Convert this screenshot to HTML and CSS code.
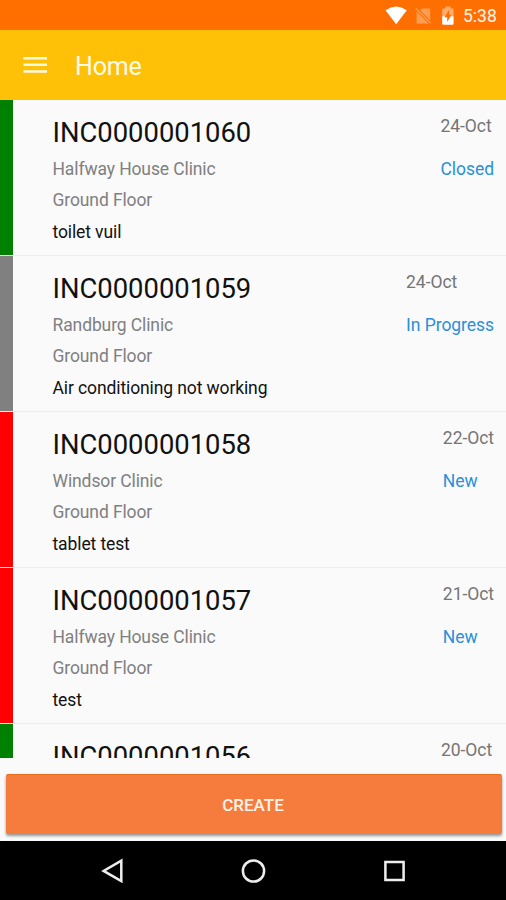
FILE: index.html
```html
<!DOCTYPE html>
<html lang="en">
<head>
<meta charset="utf-8">
<title>Home</title>
<link rel="stylesheet" href="styles.css">
</head>
<body>
<div class="screen">
  <div class="status-bar">
    <svg class="status-icons" width="76" height="30" viewBox="0 0 76 30" aria-hidden="true">
      <path d="M0.5 10.2Q11.2 3 21.8 10.2L11.2 24.2Z" fill="#fff"/>
      <path d="M45.2 8.6V20.2L35.2 10.2L37 8.6ZM31.6 11.6L43.6 23.6H31.6ZM31.2 7.8L46.2 22.8L45.2 23.8L30.2 8.8Z" fill="#ff9d52"/>
      <path d="M58.4 8.4H60.4V6.6H65.6V8.4H67.4Q68.6 8.4 68.6 9.6V16.5H57.2V9.6Q57.2 8.4 58.4 8.4Z" fill="#ffac6c"/>
      <path d="M57.2 16.3H68.6V23.5Q68.6 24.7 67.4 24.7H58.4Q57.2 24.7 57.2 23.5Z" fill="#fff"/>
      <path d="M64.3 9.5L59.5 17.3H62.2V22L66.4 14.8H64Z" fill="#ff6f00"/>
    </svg>
    <span class="clock">5:38</span>
  </div>
  <header class="app-bar">
    <svg width="24" height="18" viewBox="0 0 24 18" aria-hidden="true"><path d="M0.4 2.3H24M0.4 8.8H24M0.4 15.5H24" stroke="#fff9df" stroke-width="2.5"/></svg>
    <h1>Home</h1>
  </header>
  <main class="list">
    <article class="row closed">
      <div class="info"><h2>INC0000001060</h2><p>Halfway House Clinic</p><p>Ground Floor</p><p class="note">toilet vuil</p></div>
      <div class="meta"><p>24-Oct</p><p class="state">Closed</p></div>
    </article>
    <article class="row progress">
      <div class="info"><h2>INC0000001059</h2><p>Randburg Clinic</p><p>Ground Floor</p><p class="note">Air conditioning not working</p></div>
      <div class="meta"><p>24-Oct</p><p class="state">In Progress</p></div>
    </article>
    <article class="row new">
      <div class="info"><h2>INC0000001058</h2><p>Windsor Clinic</p><p>Ground Floor</p><p class="note">tablet test</p></div>
      <div class="meta"><p>22-Oct</p><p class="state">New</p></div>
    </article>
    <article class="row new">
      <div class="info"><h2>INC0000001057</h2><p>Halfway House Clinic</p><p>Ground Floor</p><p class="note">test</p></div>
      <div class="meta"><p>21-Oct</p><p class="state">New</p></div>
    </article>
    <article class="row closed">
      <div class="info"><h2>INC0000001056</h2></div>
      <div class="meta wide"><p>20-Oct</p></div>
    </article>
  </main>
  <div class="actions"><button class="create">CREATE</button></div>
  <nav class="nav-bar">
    <svg width="24" height="26" viewBox="0 0 24 26" aria-hidden="true"><path d="M21.3 2.6V23.2L3.6 12.9Z"/></svg>
    <svg width="26" height="26" viewBox="0 0 26 26" aria-hidden="true"><circle cx="13.5" cy="13" r="10.6"/></svg>
    <svg width="24" height="26" viewBox="0 0 24 26" aria-hidden="true"><rect x="3.4" y="4" width="18.2" height="18"/></svg>
  </nav>
</div>
</body>
</html>
```
FILE: styles.css
```css
* { box-sizing: border-box; }
body { margin: 0; font-family: Roboto, sans-serif; background: #fafafa; }
h1, h2, p { margin: 0; font-weight: 400; white-space: nowrap; }
.screen { width: 506px; height: 900px; display: flex; flex-direction: column; overflow: hidden; }
.status-bar { height: 30px; flex: none; display: flex; align-items: center; justify-content: flex-end; background: #ff6f00; padding-right: 9px; }
.status-icons { margin-right: 2px; }
.clock { width: 34px; font-size: 17.5px; line-height: 30px; padding-top: 2px; color: #fff3e6; }
.app-bar { height: 70px; flex: none; display: flex; align-items: center; background: #ffc107; padding-left: 23px; }
.app-bar h1 { margin-left: 28px; padding-top: 4px; font-size: 25px; letter-spacing: -0.2px; line-height: 32px; color: #fffbea; }
.list { height: 658px; flex: none; overflow: hidden; }
.row { height: 156px; display: flex; justify-content: space-between; padding: 15px 12px 0 0; border-bottom: 1px solid #eee; }
.row::before { content: ""; width: 13px; height: 155px; margin: -15px 39.5px 0 0; flex: none; background: var(--stripe); }
.closed { --stripe: #008000; }
.progress { --stripe: #808080; }
.new { --stripe: #f00; }
.info { flex: 1; }
.info h2 { font-size: 27.4px; line-height: 36px; margin-bottom: 3px; color: #111; }
.info p { font-size: 17.5px; letter-spacing: -0.11px; line-height: 31.3px; color: #808080; }
.info .note { color: #111; }
.meta p { font-size: 17.5px; letter-spacing: -0.05px; line-height: 24px; margin-top: -1px; color: #757575; }
.meta .state { margin-top: 19px; color: #2b90d9; }
.wide { width: 53px; }
.actions { height: 83px; flex: none; padding: 16px 4px 7px 6px; }
.create { display: block; width: 100%; height: 60px; border: 0; border-radius: 2px; border-top: 1px solid #e96f20; background: #f57c3d; box-shadow: 0 2px 3px #0006; font: 500 17px/60px Roboto, sans-serif; color: #fff3ea; padding: 0 2px 0 0; }
.nav-bar { height: 59px; flex: none; display: flex; justify-content: center; gap: 116px; align-items: center; background: #000; }
.nav-bar svg { fill: none; stroke: #eee; stroke-width: 2.5; }
```
